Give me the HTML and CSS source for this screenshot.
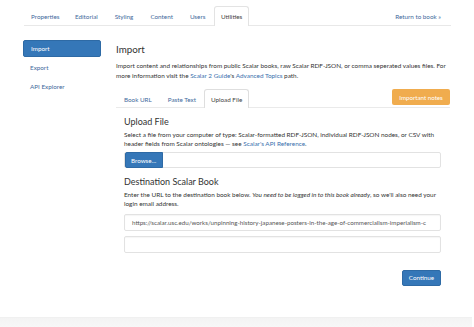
FILE: index.html
```html
<!DOCTYPE html>
<html>
<head>
<meta charset="utf-8">
<link rel="stylesheet" href="styles.css">
</head>
<body>
<div class="page">
  <nav class="topnav">
    <a class="tab">Properties</a>
    <a class="tab">Editorial</a>
    <a class="tab">Styling</a>
    <a class="tab">Content</a>
    <a class="tab">Users</a>
    <a class="tab active">Utilities</a>
    <a class="tab nav-right">Return to book »</a>
  </nav>
  <div class="layout">
    <aside class="sidebar">
      <a class="side-item active">Import</a>
      <a class="side-item">Export</a>
      <a class="side-item">API Explorer</a>
    </aside>
    <main class="main">
      <h1 class="title">Import</h1>
      <p class="text">Import content and relationships from public Scalar books, raw Scalar RDF-JSON, or comma seperated values files. For more information visit the <a class="link">Scalar 2 Guide</a>'s <a class="link">Advanced Topics</a> path.</p>
      <div class="subtabs">
        <a class="subtab">Book URL</a>
        <a class="subtab">Paste Text</a>
        <a class="subtab active">Upload File</a>
        <button class="btn-warning">Important notes</button>
      </div>
      <section class="panel">
        <h2 class="heading">Upload File</h2>
        <p class="text">Select a file from your computer of type: Scalar-formatted RDF-JSON, individual RDF-JSON nodes, or CSV with header fields from Scalar ontologies — see <a class="link">Scalar's API Reference</a>.</p>
        <div class="file-input"><span class="btn-primary browse">Browse...</span></div>
        <h2 class="heading">Destination Scalar Book</h2>
        <p class="text">Enter the URL to the destination book below. <em>You need to be logged in to this book already</em>, so we'll also need your login email address.</p>
        <div class="field url">https://scalar.usc.edu/works/unpinning-history-japanese-posters-in-the-age-of-commercialism-imperialism-c</div>
        <div class="field empty"></div>
        <div class="actions"><button class="btn-primary continue">Continue</button></div>
      </section>
    </main>
  </div>
</div>
<footer class="footer"></footer>
</body>
</html>
```

FILE: styles.css
```css
* { box-sizing: border-box; }
html, body { margin: 0; padding: 0; background: #fff; }
body {
  font-family: Lato, "Open Sans", sans-serif;
  color: #333;
  width: 474px;
  height: 327px;
  overflow: hidden;
  position: relative;
}
a { text-decoration: none; }
.page { padding-top: 6px; }

.topnav {
  display: flex;
  margin: 0 23px 0 24px;
  height: 20px;
  border-bottom: 1px solid #e8e8e8;
}
.tab {
  display: flex;
  align-items: center;
  height: 20px;
  padding: 0 7.5px;
  font-size: 6.3px;
  color: #3f6a9c;
  border: 1px solid transparent;
  border-bottom: none;
}
.tab:first-child { padding-left: 6px; padding-right: 6px; }
.tab.active {
  color: #444;
  border-color: #e3e3e3;
  background: #fff;
  border-radius: 3px 3px 0 0;
  height: 20px;
  margin-bottom: -1px;
  padding: 0 6px;
}
.nav-right { margin-left: auto; padding-right: 9px; }

.layout {
  display: flex;
  margin-top: 14px;
  padding: 0 24px 0 23px;
}
.sidebar {
  width: 78px;
  display: flex;
  flex-direction: column;
  flex-shrink: 0;
}
.side-item {
  display: flex;
  align-items: center;
  height: 17px;
  padding-left: 7px;
  margin-bottom: 2px;
  font-size: 6.3px;
  color: #3f6a9c;
  border-radius: 2px;
}
.side-item.active {
  background: #3577b8;
  color: #fff;
  border: 1px solid #2e6aa5;
}
.main { flex: 1; margin-left: 15px; }
.title {
  margin: 0;
  font-size: 9.8px;
  font-weight: 400;
  line-height: 18px;
  color: #333;
}
.text {
  margin: 3px 0 0;
  font-size: 6.4px;
  line-height: 9.5px;
  color: #333;
}
.link { color: #3a70ad; }
.subtabs {
  display: flex;
  align-items: flex-start;
  margin-top: 9px;
  height: 19px;
  border-bottom: 1px solid #eaeaea;
}
.subtab {
  display: flex;
  align-items: center;
  height: 19px;
  padding: 0 7px;
  font-size: 6.3px;
  color: #3f6a9c;
  border: 1px solid transparent;
  border-bottom: none;
}
.subtab:first-child { padding-left: 7px; padding-right: 6px; }
.subtab:nth-child(2) { padding-left: 8px; padding-right: 7px; }
.subtab.active {
  color: #444;
  border-color: #dedede;
  border-radius: 3px 3px 0 0;
  background: #fff;
  height: 19px;
  margin-bottom: -1px;
  padding: 0 6px;
}
.btn-warning {
  margin-left: auto;
  margin-right: 0;
  height: 16px;
  width: 58px;
  padding: 0;
  border: none;
  border-radius: 2px;
  background: #f0ac4e;
  color: #fff;
  font-family: Lato, sans-serif;
  font-size: 6.2px;
}
.panel { padding: 0 9px 0 8px; }
.heading {
  margin: 7px 0 0;
  font-size: 9px;
  font-weight: 400;
  line-height: 14px;
  color: #333;
}
.panel .text { margin-top: 0.5px; line-height: 9px; }
.file-input {
  margin-top: 4.5px;
  height: 16px;
  border: 1px solid #e2e2e2;
  border-radius: 2px;
  display: flex;
}
.btn-primary {
  background: #3577b8;
  color: #fff;
  border: 1px solid #2e6aa5;
  border-radius: 2px;
  font-family: Lato, sans-serif;
  font-size: 6.3px;
}
.browse {
  display: flex;
  align-items: center;
  width: 38px;
  height: 16px;
  margin: -1px 0 0 0;
  padding-left: 5px;
  border-radius: 2px 0 0 2px;
}
.field {
  height: 17px;
  border: 1px solid #e2e2e2;
  border-radius: 2px;
  box-shadow: inset 0 1px 1px rgba(0,0,0,0.04);
  font-size: 6.2px;
  color: #555;
  display: flex;
  align-items: center;
  padding-left: 7px;
  white-space: nowrap;
  overflow: hidden;
}
.url { margin-top: 6px; }
.empty { margin-top: 5px; }
.actions { display: flex; justify-content: flex-end; margin-top: 17px; }
.continue {
  width: 39px;
  height: 16px;
  padding: 0;
}
.footer {
  position: absolute;
  left: 0;
  right: 2px;
  top: 317px;
  height: 12px;
  background: linear-gradient(#f3f3f3, #f8f8f8);
  border-top: 1px solid #f0f0f0;
}
```
